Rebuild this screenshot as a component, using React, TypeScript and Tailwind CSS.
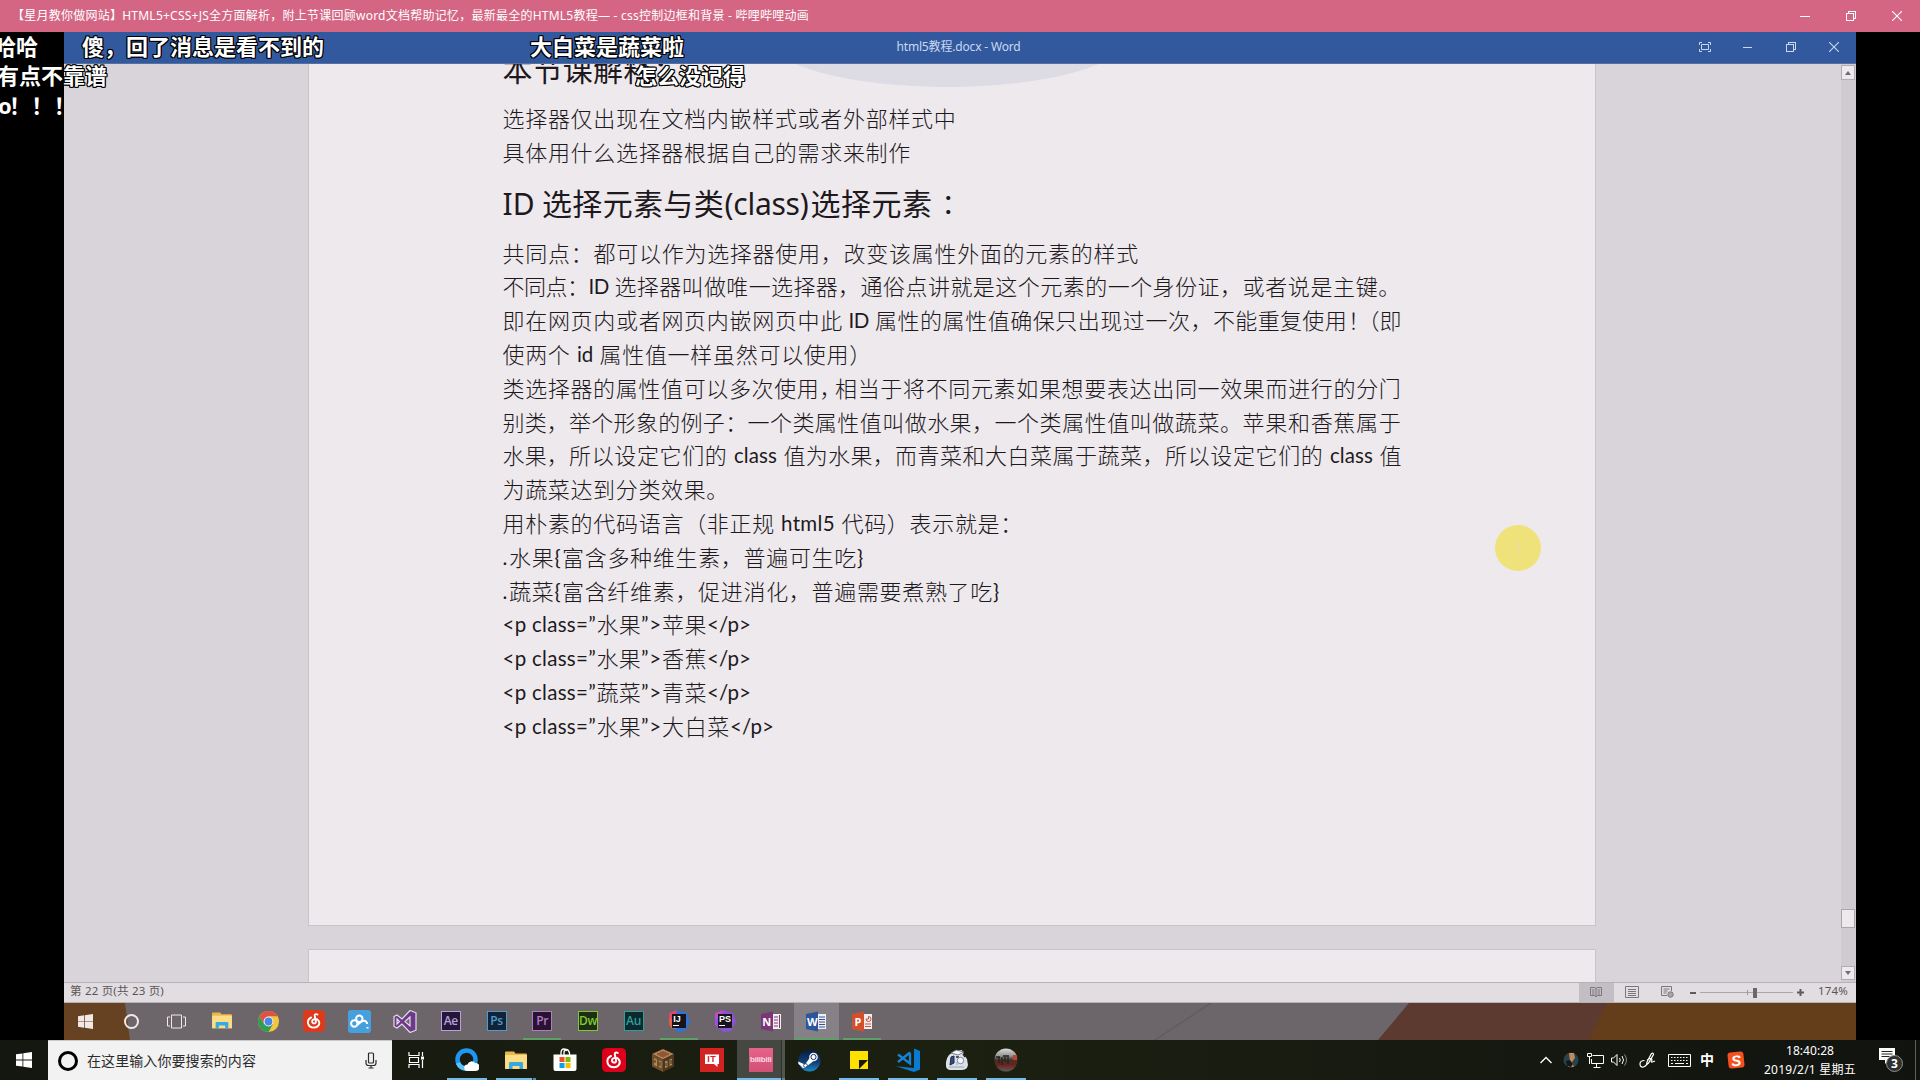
import { useLayoutEffect, useRef } from "react";
import type { ReactNode } from "react";

/* One run of text tracked so that it fills exactly the given width. */
function Fit({ t, w, ml = 0, className = "" }: { t: string; w: number; ml?: number; className?: string }) {
  const ref = useRef<HTMLSpanElement>(null);
  useLayoutEffect(() => {
    const el = ref.current;
    if (!el) return;
    el.style.letterSpacing = "0px";
    const natural = el.getBoundingClientRect().width;
    el.style.letterSpacing = `${(w - natural) / Array.from(t).length}px`;
  }, [t, w]);
  return (
    <span className={`block shrink-0 whitespace-pre ${className}`} style={{ width: w, marginLeft: ml }}>
      <span ref={ref} className="inline-block">{t}</span>
    </span>
  );
}

/* [text, start x, end x] measured from the left edge of the screen */
type Run = [string, number, number];
const LEFT = 502.5;

function Line({ runs, className = "" }: { runs: Run[]; className?: string }) {
  return (
    <div className={`flex ${className}`}>
      {runs.map(([t, x, e], i) => {
        const prev = i === 0 ? LEFT : runs[i - 1][2];
        const latin = /^[\x00-\x7f”]+$/.test(t);
        return <Fit key={i} t={t} w={e - x} ml={x - prev} className={latin ? "font-normal text-[20.500px]" : ""} />;
      })}
    </div>
  );
}

const intro: Run[][] = [
  [["选择器仅出现在文档内嵌样式或者外部样式中", 502.5, 956.5]],
  [["具体用什么选择器根据自己的需求来制作", 502.5, 911]],
];

const body: Run[][] = [
  [["共同点：", 502.5, 593.5], ["都可以作为选择器使用，改变该属性外面的元素的样式", 593.5, 1139]],
  [["不同点：", 502.5, 588.5], ["ID", 588.5, 609], ["选择器叫做唯一选择器，", 614.5, 860.5], ["通俗点讲就是这个元素的一个身份证，", 860.5, 1242.5], ["或者说是主键。", 1242.5, 1401]],
  [["即在网页内或者网页内嵌网页中此", 502.5, 843], ["ID", 848.5, 869], ["属性的属性值确保只出现过一次，", 875, 1213], ["不能重复使用", 1213, 1347], ["！", 1348, 1357.5], ["（", 1357.5, 1379.5], ["即", 1379.5, 1402]],
  [["使两个", 502.5, 570.5], ["id", 577, 593], ["属性值一样虽然可以使用）", 599.5, 872]],
  [["类选择器的属性值可以多次使用", 502.5, 819.5], ["，", 819.5, 835], ["相当于将不同元素如果想要表达出同一效果而进行的分门", 835, 1401.5]],
  [["别类，", 502.5, 569], ["举个形象的例子：", 569, 747.5], ["一个类属性值叫做水果，", 747.5, 994.5], ["一个类属性值叫做蔬菜。", 994.5, 1242.5], ["苹果和香蕉属于", 1242.5, 1401.5]],
  [["水果，", 502.5, 569], ["所以设定它们的", 569, 727.5], ["class", 734, 777], ["值为水果，", 783.5, 895], ["而青菜和大白菜属于蔬菜，", 895, 1165], ["所以设定它们的", 1165, 1323.5], ["class", 1330, 1373], ["值", 1379.5, 1402]],
  [["为蔬菜达到分类效果。", 502.5, 729]],
  [["用朴素的代码语言（非正规", 502.5, 775], ["html5", 781, 835], ["代码）表示就是：", 841.5, 1023]],
  [[".", 502.5, 509], ["水果", 509, 554.5], ["{", 554.5, 561.5], ["富含多种维生素，普遍可生吃", 562, 857], ["}", 857, 864]],
  [[".", 502.5, 509], ["蔬菜", 509, 554.5], ["{", 554.5, 561.5], ["富含纤维素，促进消化，普遍需要煮熟了吃", 562, 993], ["}", 993, 1000]],
  [["<p class=”", 502.5, 596], ["水果", 596.5, 641], ["”>", 641, 662], ["苹果", 662, 707], ["</p>", 707, 751]],
  [["<p class=”", 502.5, 596], ["水果", 596.5, 641], ["”>", 641, 662], ["香蕉", 662, 707], ["</p>", 707, 751]],
  [["<p class=”", 502.5, 596], ["蔬菜", 596.5, 641], ["”>", 641, 662], ["青菜", 662, 707], ["</p>", 707, 751]],
  [["<p class=”", 502.5, 596], ["水果", 596.5, 641], ["”>", 641, 662], ["大白菜", 662, 730], ["</p>", 730, 774]],
];

/* ---------- window control glyphs ---------- */
function Min({ s = 10 }: { s?: number }) {
  return <svg width={s} height="10" shapeRendering="crispEdges"><path d={`M0 5.5h${s}`} stroke="currentColor" /></svg>;
}
function Restore() {
  return (
    <svg width="10" height="10" shapeRendering="crispEdges" fill="none" stroke="currentColor">
      <path d="M.5 2.5h7v7h-7zM2.5 2V.5h7v7H8" />
    </svg>
  );
}
function Close() {
  return <svg width="10" height="10" stroke="currentColor" strokeWidth="1.1"><path d="M0 0 10 10M10 0 0 10" /></svg>;
}

/* ---------- icons ---------- */
function Win({ s = 16 }: { s?: number }) {
  return (
    <svg width={s} height={s} viewBox="0 0 16 16" fill="currentColor">
      <path d="M0 2.3 6.5 1.4V7.6H0zM7.3 1.3 16 0v7.6H7.3zM0 8.4h6.5v6.2L0 13.7zM7.3 8.4H16V16l-8.7-1.3z" />
    </svg>
  );
}
function Folder({ w = 22 }: { w?: number }) {
  return (
    <svg width={w} height={w * 0.86} viewBox="0 0 22 19">
      <path d="M0 1.5Q0 .5 1 .5h8l1.5 2H21q1 0 1 1V18H0z" fill="#e9b84c" />
      <path d="M0 4h22v14H0z" fill="#fcdc86" />
      <path d="M4 18v-6q0-1 1-1h12q1 0 1 1v6h-3.5v-3h-7v3z" fill="#36a9e0" />
    </svg>
  );
}
function NetEase({ s, bg }: { s: number; bg: string }) {
  return (
    <svg width={s} height={s} viewBox="0 0 24 24" fill="none" stroke="#fff" strokeWidth="2" strokeLinecap="round">
      <rect width="24" height="24" rx="4.5" fill={bg} stroke="none" />
      <path d="M15.800 5c-1.700-1.200-3.400-.3-3 1.500l1.300 6c.5 2.500-3.900 3-4.100.2-.2-3.200 5-4 7-1 2.200 3.500-.6 7.500-5 7.500-7.200 0-9-8.300-3-11.200" />
    </svg>
  );
}
function Chrome() {
  return (
    <svg width="21" height="21" viewBox="0 0 20 20">
      <circle cx="10" cy="10" r="10" fill="#f5c63a" />
      <path d="M1.340 5A10 10 0 0 1 18.660 5H10L5.700 12.500z" fill="#de5143" />
      <path d="M1.340 5A10 10 0 0 0 10 20l4.300-7.500H5.700z" fill="#2f9d57" />
      <circle cx="10" cy="10" r="4.700" fill="#f3eff0" />
      <circle cx="10" cy="10" r="3.700" fill="#4a85e8" />
    </svg>
  );
}
function Cloud() {
  return (
    <svg width="23" height="23" viewBox="0 0 23 23" fill="none" stroke="#fff" strokeWidth="2">
      <rect width="23" height="23" rx="3" fill="#46a0dd" stroke="none" />
      <circle cx="6.300" cy="13.500" r="3.200" /><circle cx="11.300" cy="8.700" r="3.200" />
      <path d="M8.500 15.500 13 12q4-3 6 1v1M19.500 17v1.500" />
    </svg>
  );
}
function VisualStudio() {
  return (
    <svg width="24" height="23" viewBox="0 0 24 23">
      <path d="M1 6.500 4 5l5 4 8-8.500 6 2.300v17.400l-6 2.300-8-8.500-5 4-3-1.500zM4 9v5l2.500-2.500zM17 7l-5 4.500 5 4.500z" fill="#6d3a8b" fillRule="evenodd" stroke="#e5dbe8" strokeWidth="1.200" />
    </svg>
  );
}
function Adobe({ t, c, bg }: { t: string; c: string; bg: string }) {
  return (
    <div className="flex size-[20px] items-center justify-center border-[1.5px] font-['Open_Sans'] text-[12px] leading-none font-semibold tracking-[-0.3px]" style={{ color: c, borderColor: c, background: bg }}>
      {t}
    </div>
  );
}
function Jet({ t, a, b, c }: { t: string; a: string; b: string; c: string }) {
  return (
    <div className="relative flex size-[22px] items-center justify-center">
      <svg className="absolute inset-0" width="22" height="22" viewBox="0 0 22 22">
        <path d="M1 3 9 0l6 5-9 14-5-4z" fill={a} />
        <path d="M9 0 19 3l3 9-5 9-7 1-6-4z" fill={b} />
        <path d="M1 10 8 5v14l-5-1z" fill={c} />
      </svg>
      <div className="relative flex size-[14px] flex-col justify-between bg-[#16131b] p-[1px] pb-[2px]">
        <span className="font-['Liberation_Sans'] text-[9px] leading-[9px] font-bold text-white">{t}</span>
        <span className="h-px w-[6px] bg-white" />
      </div>
    </div>
  );
}
function Office({ t, c, lines }: { t: string; c: string; lines: ReactNode }) {
  return (
    <div className="relative h-[21px] w-[22px]">
      <svg className="absolute inset-0" width="22" height="21" viewBox="0 0 22 21">
        <path d="M11 3h10v15H11z" fill="#f1edf1" />
        {lines}
        <path d="M1 3 13 .5v20L1 18z" fill={c} />
      </svg>
      <span className="relative block w-[14px] text-center font-['Open_Sans'] text-[11px] leading-[21px] font-bold text-white">{t}</span>
    </div>
  );
}

const innerIcons: { icon: ReactNode; active?: boolean; line?: boolean }[] = [
  { icon: <Win s={15} /> },
  { icon: <span className="size-[15px] rounded-full border-2 border-current" /> },
  {
    icon: (
      <svg width="19" height="15" fill="none" stroke="currentColor"><path d="M4.500 1h10v13h-10zM3 3H.500v9H3M16 3h2.500v9H16" /></svg>
    ),
  },
  { icon: <Folder w={20} /> },
  { icon: <Chrome /> },
  { icon: <NetEase s={22} bg="#dd3a1c" /> },
  { icon: <Cloud /> },
  { icon: <VisualStudio /> },
  { icon: <Adobe t="Ae" c="#b9a0dc" bg="#241638" /> },
  { icon: <Adobe t="Ps" c="#4a9dcf" bg="#122337" /> },
  { icon: <Adobe t="Pr" c="#b07cc6" bg="#2a1232" />, line: true },
  { icon: <Adobe t="Dw" c="#83c63a" bg="#1c2f10" /> },
  { icon: <Adobe t="Au" c="#2f9f9c" bg="#0c2a2d" /> },
  { icon: <Jet t="IJ" a="#e2486c" b="#2f72d8" c="#e0663f" />, line: true },
  { icon: <Jet t="PS" a="#c44bc0" b="#8b53d8" c="#9a4fe0" /> },
  { icon: <Office t="N" c="#7c3577" lines={<path d="M14 6h4M14 9h4M14 12h4M14 15h4M19.500 4v13" stroke="#7c3577" />} /> },
  { icon: <Office t="W" c="#2b559c" lines={<path d="M14 6h6M14 8.500h6M14 11h6M14 13.500h6M14 16h6" stroke="#2b559c" />} />, active: true, line: true },
  { icon: <Office t="P" c="#d2502d" lines={<path d="M14 13h6M14 15.500h6M15 8a2.500 2.500 0 1 0 2.500-2.500V8z" stroke="#d2502d" fill="none" />} />, line: true },
];

function QQBrowser() {
  return (
    <svg width="24" height="24" viewBox="0 0 24 24">
      <circle cx="11.500" cy="11.500" r="9" fill="none" stroke="#1f96f3" strokeWidth="4.500" />
      <path d="M3 15A9 9 0 0 0 12 20.500" fill="none" stroke="#5cc4f5" strokeWidth="4.500" />
      <path d="M12.500 23a3.300 3.300 0 0 1 0-6.600 4.500 4.500 0 0 1 7.700-1.400 4 4 0 0 1 .500 8z" fill="#fff" />
    </svg>
  );
}
function Store() {
  return (
    <svg width="24" height="24" viewBox="0 0 24 24">
      <path d="M8 8V5q0-4 3-4 2 0 2.500 2M11 7V4q.5-2.500 2.500-2.500T16.500 5v3" fill="none" stroke="#fff" strokeWidth="1.300" />
      <path d="M.5 6.500h23V21q0 2-2 2h-19q-2 0-2-2z" fill="#fff" />
      <path d="M6.500 9h5v5h-5z" fill="#f25022" /><path d="M12.500 9h5v5h-5z" fill="#7fba00" />
      <path d="M6.500 15h5v5h-5z" fill="#00a4ef" /><path d="M12.500 15h5v5h-5z" fill="#ffb900" />
    </svg>
  );
}
function CraftTable() {
  return (
    <svg width="22" height="24" viewBox="0 0 22 24">
      <path d="M11 1 22 6 11 11.500 0 6z" fill="#b07a50" />
      <path d="M11 2.500 19 6l-8 4-8-4z" fill="#8d5638" stroke="#c99868" strokeWidth=".8" strokeDasharray="2 1" />
      <path d="M0 6 11 11.500V24L0 18.500z" fill="#6e4f2c" /><path d="M22 6 11 11.500V24l11-5.500z" fill="#4d371f" />
      <path d="M2 10v7l3 1.500v-7zM7 12.500V19l2.500 1V13.500zM13 13.500V20l2.500-1v-6.500zM17.500 11.500V18l2.500-1v-6.500z" fill="#b08a55" />
      <path d="M3 12v3M8 14v4M14 15v3M19 12v4" stroke="#3a2816" />
    </svg>
  );
}
function ItHome() {
  return (
    <div className="relative flex size-[24px] items-center justify-center bg-[#d22222]">
      <svg className="absolute inset-0" width="24" height="24"><path d="M5 6.500h14v9.500h-1.500v3L14 16H5z" fill="#fff" /></svg>
      <span className="relative -mt-[2px] font-['Liberation_Sans'] text-[9px] leading-none font-bold tracking-[0.5px] text-[#d22222]">IT</span>
    </div>
  );
}
function Bili() {
  return (
    <div className="flex size-[24px] items-center justify-center overflow-hidden bg-linear-to-b from-[#e8638a] to-[#d24f76]">
      <span className="font-['Liberation_Sans'] text-[8px] leading-none font-bold tracking-[-0.2px] text-[#f9dfe8]">bilibili</span>
    </div>
  );
}
function Steam() {
  return (
    <svg width="23" height="23" viewBox="0 0 23 23">
      <defs><linearGradient id="st" x1="0" y1="0" x2="0" y2="1"><stop offset="0" stopColor="#0b1a3d" /><stop offset=".6" stopColor="#12417a" /><stop offset="1" stopColor="#1a8cc6" /></linearGradient></defs>
      <circle cx="11.500" cy="11.500" r="11" fill="url(#st)" />
      <path d="M0 12.500 7 15.500 12 8.500l3 4-6 4.500a3.200 3.200 0 0 1-6 0L.5 15z" fill="#fff" />
      <circle cx="15.500" cy="8" r="4.300" fill="#fff" /><circle cx="15.500" cy="8" r="2.600" fill="#fff" stroke="#12305f" />
      <circle cx="7.500" cy="16.500" r="1.900" fill="none" stroke="#12417a" strokeWidth=".8" />
    </svg>
  );
}
function Sticky() {
  return <svg width="18" height="18"><path d="M0 0h18v18H0z" fill="#ffe100" /><path d="M9 18V9h9z" fill="#161810" /></svg>;
}
function Code() {
  return (
    <svg width="24" height="24" viewBox="0 0 24 24">
      <path d="M18 .5 24 3v18.500L18 24 0 18.300l18 1.700z" fill="#0a7bd0" />
      <path d="M14 4.500v11L2 6.500M14 4.500 2 14" fill="none" stroke="#1684d6" strokeWidth="2.300" />
    </svg>
  );
}
function Robot() {
  return (
    <svg width="24" height="24" viewBox="0 0 24 24">
      <path d="M1 14q1-5 3-7l5-4 8-1 2 5 3 4 1 6-1 3q-2 2-5 2H5q-4-1-4-4z" fill="#dde2e8" />
      <path d="M6 5l5-3 8 2-6 3z" fill="#f4f6f8" stroke="#59616b" strokeWidth=".8" />
      <path d="M6 9l3-1v7l-4 2z" fill="#2b4d8f" stroke="#242b36" />
      <path d="M11 9h3M18 6l2 3" stroke="#242b36" strokeWidth="1.400" />
      <circle cx="15.500" cy="12.500" r="3.200" fill="#f8fafc" stroke="#7089a8" /><path d="M12 14v3M4 19h15" stroke="#9aa6b5" />
    </svg>
  );
}
function Orb() {
  return (
    <svg width="24" height="24" viewBox="0 0 24 24">
      <defs><linearGradient id="orb" x1="0" y1="0" x2="0" y2="1"><stop offset="0" stopColor="#d8dad8" /><stop offset=".3" stopColor="#9a9b97" /><stop offset=".5" stopColor="#3a332e" /><stop offset=".7" stopColor="#6d211d" /><stop offset="1" stopColor="#5c5a55" /></linearGradient></defs>
      <circle cx="12" cy="12" r="11.500" fill="url(#orb)" />
      <path d="M2 9h4M9 8h6M5 9v6M8 9v8M11 9v5M14 9v7" stroke="#22221e" strokeWidth="1.300" />
      <path d="M19 7h3.500l.5 5h-4z" fill="#c8402f" />
    </svg>
  );
}

const apps: { icon: ReactNode; line?: boolean; active?: boolean; stacked?: boolean }[] = [
  { icon: <QQBrowser />, line: true },
  { icon: <Folder w={22} />, line: true, stacked: true },
  { icon: <Store /> },
  { icon: <NetEase s={24} bg="#dd001b" /> },
  { icon: <CraftTable /> },
  { icon: <ItHome /> },
  { icon: <Bili />, active: true, line: true, stacked: true },
  { icon: <Steam /> },
  { icon: <Sticky />, line: true },
  { icon: <Code />, line: true },
  { icon: <Robot />, line: true },
  { icon: <Orb />, line: true },
];

/* Bullet comments flying over the video: text, x, y of the centre, width */
const bullets: [string, number, number, number][] = [
  ["哈哈", -6, 46, 44],
  ["傻，回了消息是看不到的", 82, 46, 242],
  ["大白菜是蔬菜啦", 530, 46, 154],
  ["有点不靠谱", -3, 75, 110],
  ["怎么没记得", 635, 75, 110],
  ["o", -2, 105, 12],
  ["！！！", 9, 105, 67],
];

export default function App() {
  return (
    <div className="relative flex h-[1080px] w-[1920px] flex-col overflow-hidden bg-black font-['Noto_Sans','Noto_Sans_CJK_SC',sans-serif]">
      {/* player title bar */}
      <header className="flex h-[32px] shrink-0 items-center justify-between bg-[#d46684] text-white">
        <Fit t="【星月教你做网站】HTML5+CSS+JS全方面解析，附上节课回顾word文档帮助记忆，最新最全的HTML5教程— - css控制边框和背景 - 哔哩哔哩动画" w={797} ml={12} className="text-[12px]" />
        <div className="flex">
          <span className="flex w-[46px] justify-center"><Min /></span>
          <span className="flex w-[46px] justify-center"><Restore /></span>
          <span className="flex w-[46px] justify-center"><Close /></span>
        </div>
      </header>

      {/* video frame */}
      <main className="mr-[64px] ml-[64px] flex h-[1008px] shrink-0 flex-col bg-[#d9d4d9]">
        <div className="flex h-[32px] shrink-0 items-center border-b border-[#56719f] bg-[#32599d] pb-px text-[#c9d8f0]">
          <Fit t="html5教程.docx - Word" w={124} ml={832.5} className="text-[12px]" />
          <div className="ml-auto flex items-center pr-px">
            <span className="flex w-[43px] justify-center">
              <svg width="12" height="10" fill="none" stroke="currentColor"><path d="M2.500 2.500h7v5h-7zM.500 3V.500H3M9 .500h2.500V3M.500 7v2.500H3M9 9.500h2.500V7" /></svg>
            </span>
            <span className="flex w-[43px] justify-center"><Min s={9} /></span>
            <span className="flex w-[43px] justify-center"><Restore /></span>
            <span className="flex w-[43px] justify-center"><Close /></span>
          </div>
        </div>

        <div className="flex min-h-0 flex-1 overflow-hidden">
          {/* document pages */}
          <div className="ml-[243.5px] flex w-[1288px] flex-col">
            <section className="relative h-[862px] shrink-0 overflow-hidden border border-t-0 border-[#c9c4c9] bg-[#eee9ed] text-[#1d191d]">
              <div className="absolute -top-[74px] left-[460px] h-[97px] w-[356px] rounded-[50%] bg-[#dddbe3]" />
              <div className="relative pl-[194px]">
                <h2 className="-mt-[16px] flex h-[44px] items-center text-[30px] leading-[44px]">
                  <Fit t="本节课解释：" w={181} />
                </h2>
                <div className="mt-[10px] text-[22px] leading-[33.800px] font-light">
                  {intro.map((r, i) => <Line key={i} runs={r} className="h-[33.800px] font-['Lato','Noto_Sans_CJK_SC',sans-serif]" />)}
                </div>
                <h2 className="flex h-[67px] items-center text-[30px] font-normal">
                  <Fit t="ID" w={32} ml={0} />
                  <Fit t="选择元素与类" w={182} ml={7.500} />
                  <Fit t="(class)" w={84} ml={0.500} />
                  <Fit t="选择元素" w={122} ml={2} />
                  <Fit t="：" w={30} ml={9} className="pt-[3px] text-[27px]" />
                </h2>
                <div className="text-[22px] leading-[33.800px] font-light">
                  {body.map((r, i) => <Line key={i} runs={r} className="h-[33.800px] font-['Lato','Noto_Sans_CJK_SC',sans-serif]" />)}
                </div>
              </div>
              {/* highlighted pointer */}
              <div className="absolute top-[461px] left-[1186.500px] flex size-[46px] items-center justify-center rounded-full bg-[#efe27a]">
                <span className="h-[14px] w-px bg-[#e6dba5]" />
              </div>
            </section>
            <section className="mt-[23px] h-[60px] shrink-0 border border-[#c9c4c9] bg-[#eee9ed]" />
          </div>
          {/* scroll bar */}
          <div className="ml-auto flex w-[15px] flex-col items-start bg-[#d0cbd0] pt-px">
            <span className="flex h-[15px] w-[14px] items-center justify-center border border-[#b1acb1] bg-[#eee9ed]">
              <svg width="6" height="4"><path d="M0 4 3 0l3 4z" fill="#716c71" /></svg>
            </span>
            <span className="mt-[829px] h-[19px] w-[14px] border border-[#aaa5aa] bg-[#eee9ed]" />
            <span className="mt-[38px] flex h-[14px] w-[14px] items-center justify-center border border-[#b1acb1] bg-[#eee9ed]">
              <svg width="6" height="4"><path d="M0 0h6L3 4z" fill="#716c71" /></svg>
            </span>
          </div>
        </div>

        {/* word status bar */}
        <div className="flex h-[21px] shrink-0 items-center border-t border-b border-[#b7b2b7] bg-[#e2dde1] text-[11.500px] text-[#5a555a]">
          <Fit t="第 22 页(共 23 页)" w={94} ml={6} className="-mt-[3px] leading-[18px]" />
          <div className="ml-auto flex h-full items-center">
            <span className="flex h-full w-[35px] items-center justify-center bg-[#c3bec3]">
              <svg className="-mt-[2px]" width="12" height="12" fill="none" stroke="#7b767b"><path d="M.500 1.500h4l1.500 1 1.500-1h4v8h-4L6 11 4.500 9.500h-4zM6 2v9M2 4h2.500M2 6h2.500M2 8h2.500M7.500 4H10M7.500 6H10M7.500 8H10" /></svg>
            </span>
            <span className="flex w-[36px] justify-center">
              <svg className="-mt-px" width="14" height="12" fill="none" stroke="#7b767b"><path d="M.500.500h13v11H.500zM3 3.500h8M3 5.500h8M3 7.500h8M3 9.500h8" /></svg>
            </span>
            <span className="flex w-[35px] justify-center">
              <svg className="-mt-px" width="13" height="12" fill="none" stroke="#7b767b"><path d="M6 9.500H.500v-9h10V5M2.500 3h6M2.500 5h4M2.500 7h3" /><circle cx="9.500" cy="8.500" r="2.700" fill="#aaa5aa" /></svg>
            </span>
            <span className="ml-[5px] h-[2px] w-[6px] bg-[#5f5a5f]" />
            <span className="ml-[4px] flex h-[12px] w-[93px] items-center">
              <span className="h-px w-[47px] bg-[#aaa5aa]" />
              <span className="h-[5px] w-px bg-[#9a959a]" />
              <span className="h-px w-[5px] bg-[#aaa5aa]" />
              <span className="h-[10px] w-[4px] bg-[#6b666b]" />
              <span className="h-px flex-1 bg-[#aaa5aa]" />
            </span>
            <svg className="ml-[3px]" width="9" height="9" stroke="#5f5a5f" strokeWidth="2"><path d="M1 4.500h7M4.500 1v7" /></svg>
            <Fit t="174%" w={30} ml={13.500} className="-mt-[3px] mr-[8px] leading-[18px]" />
          </div>
        </div>

        {/* recorded task bar */}
        <div className="relative flex h-[37px] shrink-0 bg-[#6c666b] text-[#f1e9e6]">
          <div className="absolute inset-y-0 left-0 w-[66px] bg-[#674222] [clip-path:polygon(0_0,61px_0,66px_100%,0_100%)]" />
          <div className="absolute inset-y-0 left-[1090px] w-[58px] bg-[#5f595e] [clip-path:polygon(0_100%,56px_0,58px_0,2px_100%)]" />
          <div className="absolute inset-y-0 right-0 w-[478px] bg-[#5d3a2f] [clip-path:polygon(31px_0,100%_0,100%_100%,0_100%)]" />
          <div className="absolute inset-y-0 right-0 w-[267px] bg-[#643d1a] [clip-path:polygon(18px_0,100%_0,100%_100%,0_100%)]" />
          <div className="relative -ml-[1.500px] flex">
            {innerIcons.map(({ icon, active, line }, i) => (
              <div key={i} className={`relative flex w-[45.700px] items-center justify-center pb-px ${active ? "bg-[#868186]" : ""}`}>
                {icon}
                {line && <span className={`absolute bottom-0 h-[2px] bg-[#5f9f68] ${active ? "inset-x-0" : "inset-x-[4px]"}`} />}
              </div>
            ))}
          </div>
        </div>
      </main>

      {/* desktop task bar */}
      <footer className="flex h-[40px] shrink-0 bg-linear-to-r from-[#14170f] via-[#1c2011] to-[#11130f] text-white">
        <span className="flex w-[48px] items-center justify-center"><Win /></span>
        <div className="flex w-[344px] items-center border-t border-[#c9c9c9] bg-[#f2f2f2] text-[#2b2b2b]">
          <span className="ml-[10px] size-[20px] rounded-full border-[3px] border-black" />
          <Fit t="在这里输入你要搜索的内容" w={169} ml={8} className="pl-px text-[14px]" />
          <svg className="mr-[15px] ml-auto" width="12" height="17" fill="none" stroke="#2b2b2b" strokeWidth="1.200"><rect x="3.500" y="1" width="5" height="10" rx="1" /><path d="M1 8v3q0 2.500 2.500 2.500h5Q11 13.500 11 11V8M6 13.500V16M3.500 16h5" /></svg>
        </div>
        <span className="flex w-[48px] items-center justify-center">
          <svg width="17" height="16" fill="none" stroke="#fff" strokeWidth="1.200"><path d="M1 0v3.500h10V0M1 16v-3.500h10V16M1.500 5.500h9v5h-9zM14.500 0v4M14.500 8v8" /><path d="M13 4.500h3v3h-3z" fill="#fff" stroke="none" /></svg>
        </span>
        <div className="ml-[2px] flex">
          {apps.map(({ icon, line, active, stacked }, i) => (
            <div key={i} className="flex w-[49.050px] justify-center">
              <div className={`relative flex w-[48px] items-center justify-center ${active ? "bg-[#454842]" : ""}`}>
                {icon}
                {line && <span className={`absolute bottom-0 h-[2px] bg-[#76b9ed] ${active ? "inset-x-0" : "inset-x-[4px]"}`} />}
                {stacked && <span className={`absolute bottom-0 w-[4px] border-l border-[#2c302b] ${active ? "right-0 h-full bg-[#5a5e58]/60" : "right-[4px] h-[2px] bg-[#5a8cb4]"}`} />}
              </div>
            </div>
          ))}
        </div>

        {/* tray */}
        <div className="ml-auto flex items-center">
          <svg width="12" height="8" fill="none" stroke="#fff" strokeWidth="1.300"><path d="M.500 7 6 1.500 11.500 7" /></svg>
          <svg className="ml-[11px]" width="16" height="16"><circle cx="8" cy="8" r="7.500" fill="#29434c" /><path d="M6 1h5l1 5-3 4 2 5H5l2-6z" fill="#c08a5c" /><path d="M3 9l4-1 3 4-2 3-4-1z" fill="#171717" /></svg>
          <svg className="ml-[8px]" width="17" height="15" fill="none" stroke="#fff"><path d="M5.500 2.500h11v8h-12V6M9.500 11v3M6.500 14.500h7M.500.500h4v3h-4zM2.500 4v7" /></svg>
          <svg className="ml-[7px]" width="17" height="14" fill="none" stroke="#fff"><path d="M.500 5h2L6 1.500v11L2.500 9h-2zM8.500 5q1.500 2 0 4M11 3q3 4 0 8" /><path d="M13.500 1.500q4 5.500 0 11" stroke="#8a8d87" /></svg>
          <svg className="ml-[11px]" width="17" height="16" fill="none" stroke="#fff" strokeWidth="1.200"><path d="M5.500 8.500Q1 8.500 1 12t3.500 3Q8 14 8 10l4.500-8.500q2-1 2 1L9.500 11 6 14M8 8q5-3 5 0-2.500 3.500 3 1" /></svg>
          <svg className="ml-[12px]" width="23" height="13" fill="none" stroke="#fff"><path d="M.500.500h22v12H.500z" /><path d="M3 3.500h18M3 6.500h18" strokeDasharray="1.500 1.500" /><path d="M3 9.500h2M7 9.500h9M18 9.500h2" /></svg>
          <span className="ml-[9px] w-[14px] text-[14px] leading-none font-bold">中</span>
          <div className="ml-[14px] flex size-[16px] -rotate-6 items-center justify-center rounded-[3px] bg-[#f4511e]">
            <span className="font-['Liberation_Sans'] text-[15px] leading-none font-bold italic">S</span>
          </div>
          <div className="ml-[20px] flex flex-col items-center text-[12px] leading-[19px]">
            <Fit t="18:40:28" w={48} />
            <Fit t="2019/2/1 星期五" w={92} />
          </div>
          <div className="relative ml-[22px] h-[24px] w-[26px]">
            <svg className="absolute inset-0" width="18" height="18"><path d="M1 0h16v12h-6l-4 4v-4H1z" fill="#fff" /><path d="M3.500 3.500h11M3.500 6h11M3.500 8.500h8" stroke="#22261e" /></svg>
            <span className="absolute top-[7px] left-[8px] flex size-[17px] items-center justify-center rounded-full border border-[#8d908b] bg-[#2d302c] text-[12px] leading-none font-bold">3</span>
          </div>
          <span className="ml-[11px] h-[40px] w-px bg-[#5d605a]" />
          <span className="w-[4px]" />
        </div>
      </footer>

      {/* bullet comments */}
      {bullets.map(([t, x, y, w], i) => (
        <div key={i} className="absolute h-[30px] text-[22px] leading-[30px] font-bold text-white [text-shadow:-1px_-1px_0_#000,1px_-1px_0_#000,-1px_1px_0_#000,1px_1px_0_#000,0_-1px_0_#000,0_1px_0_#000,-1px_0_0_#000,1px_0_0_#000]" style={{ left: x, top: y - 15 }}>
          <Fit t={t} w={w} />
        </div>
      ))}
    </div>
  );
}
